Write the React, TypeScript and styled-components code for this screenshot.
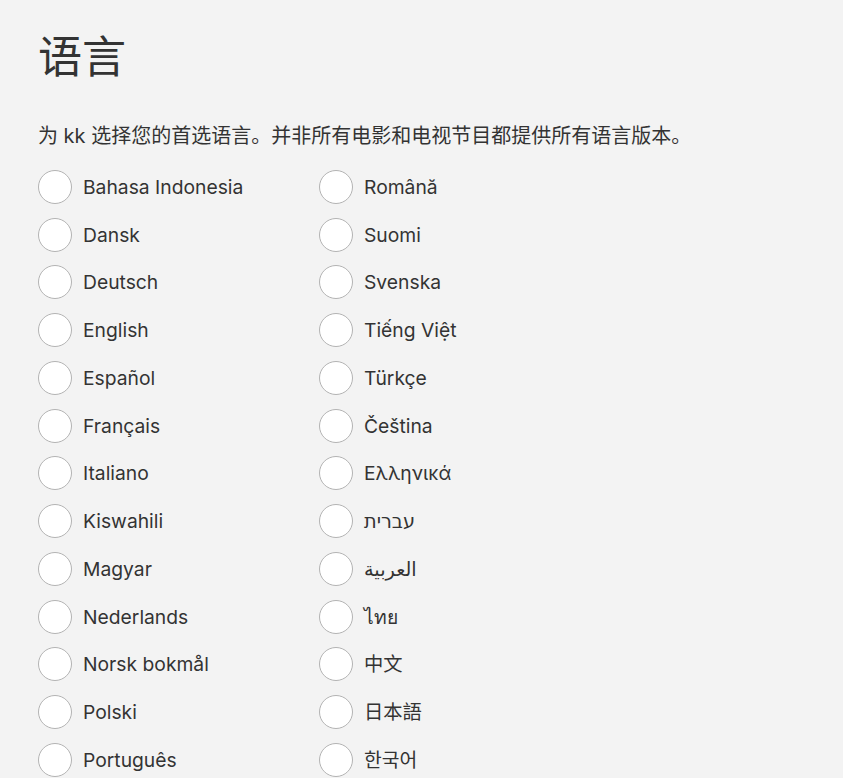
import React, { useState } from "react";
import styled, { createGlobalStyle } from "styled-components";

const GlobalStyle = createGlobalStyle`
  html, body {
    margin: 0;
    padding: 0;
    background: #f3f3f3;
  }
  body {
    font-family: Inter, "Noto Sans", "Noto Sans CJK SC", sans-serif;
    color: #333;
  }
`;

const Page = styled.div`
  padding: 26px 38px 0 38px;
  min-height: 100vh;
  box-sizing: border-box;
`;

const Title = styled.h1`
  margin: 0;
  font-family: "Noto Sans CJK SC", sans-serif;
  font-size: 44px;
  font-weight: 400;
  line-height: 56px;
  color: #333;
`;

const Intro = styled.p`
  margin: 41px 0 0 0;
  font-family: Inter, "Noto Sans CJK SC", sans-serif;
  font-size: 20px;
  line-height: 26px;
  color: #333;
`;

const Columns = styled.div`
  display: grid;
  grid-template-columns: 281px 281px;
  margin-top: 14px;
`;

const List = styled.div`
  display: flex;
  flex-direction: column;
`;

const Option = styled.label`
  display: flex;
  align-items: center;
  height: 47.75px;
  cursor: pointer;
`;

const Circle = styled.span<{ $checked: boolean }>`
  width: 32px;
  height: 32px;
  flex: none;
  border-radius: 50%;
  background: #fff;
  border: 1px solid ${({ $checked }) => ($checked ? "#333" : "#b3b3b3")};
  box-sizing: content-box;
  display: flex;
  align-items: center;
  justify-content: center;

  &::after {
    content: "";
    width: 14px;
    height: 14px;
    border-radius: 50%;
    background: #333;
    display: ${({ $checked }) => ($checked ? "block" : "none")};
  }
`;

const Label = styled.span`
  margin-left: 11px;
  font-size: 19.3px;
  line-height: 24px;
  color: #333;
  font-family: Inter, "Noto Sans", "DejaVu Sans", "Noto Sans CJK SC", sans-serif;
`;

const left = [
  "Bahasa Indonesia",
  "Dansk",
  "Deutsch",
  "English",
  "Español",
  "Français",
  "Italiano",
  "Kiswahili",
  "Magyar",
  "Nederlands",
  "Norsk bokmål",
  "Polski",
  "Português",
];

const right = [
  "Română",
  "Suomi",
  "Svenska",
  "Tiếng Việt",
  "Türkçe",
  "Čeština",
  "Ελληνικά",
  "עברית",
  "العربية",
  "ไทย",
  "中文",
  "日本語",
  "한국어",
];

export default function App() {
  const [selected, setSelected] = useState<string>("");

  const renderList = (items: string[]) => (
    <List>
      {items.map((lang) => (
        <Option key={lang} onClick={() => setSelected(lang)}>
          <Circle $checked={selected === lang} />
          <Label>{lang}</Label>
        </Option>
      ))}
    </List>
  );

  return (
    <Page>
      <GlobalStyle />
      <Title>语言</Title>
      <Intro>为 kk 选择您的首选语言。并非所有电影和电视节目都提供所有语言版本。</Intro>
      <Columns>
        {renderList(left)}
        {renderList(right)}
      </Columns>
    </Page>
  );
}
